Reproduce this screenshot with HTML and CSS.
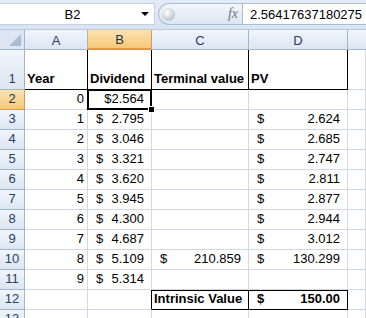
FILE: index.html
```html
<!DOCTYPE html>
<html lang="en">
<head>
    <meta charset="UTF-8">
    <title>Dividend Discount Model</title>
    <link rel="stylesheet" href="styles.css">
</head>
<body>
    <div class="formula-bar">
        <div class="name-box">
            <span class="name">B2</span>
            <span class="drop"></span>
        </div>
        <div class="fx-pill">
            <span class="knob"></span>
            <span class="fx">fx</span>
        </div>
        <div class="formula-input">2.56417637180275</div>
    </div>

    <div class="grid">
        <!-- column headers -->
        <div class="corner"><span class="tri"></span></div>
        <div class="col-head">A</div>
        <div class="col-head sel">B</div>
        <div class="col-head">C</div>
        <div class="col-head">D</div>
        <div class="col-head last"></div>

        <!-- row 1 -->
        <div class="row-head tall">1</div>
        <div class="cell title">Year</div>
        <div class="cell title">Dividend</div>
        <div class="cell title">Terminal value</div>
        <div class="cell title">PV</div>
        <div class="cell"></div>

        <!-- row 2 -->
        <div class="row-head sel">2</div>
        <div class="cell num">0</div>
        <div class="cell num active">$2.564</div>
        <div class="cell"></div>
        <div class="cell"></div>
        <div class="cell"></div>

        <div class="row-head">3</div>
        <div class="cell num">1</div>
        <div class="cell acct"><span>$</span><span>2.795</span></div>
        <div class="cell"></div>
        <div class="cell acct"><span>$</span><span>2.624</span></div>
        <div class="cell"></div>

        <div class="row-head">4</div>
        <div class="cell num">2</div>
        <div class="cell acct"><span>$</span><span>3.046</span></div>
        <div class="cell"></div>
        <div class="cell acct"><span>$</span><span>2.685</span></div>
        <div class="cell"></div>

        <div class="row-head">5</div>
        <div class="cell num">3</div>
        <div class="cell acct"><span>$</span><span>3.321</span></div>
        <div class="cell"></div>
        <div class="cell acct"><span>$</span><span>2.747</span></div>
        <div class="cell"></div>

        <div class="row-head">6</div>
        <div class="cell num">4</div>
        <div class="cell acct"><span>$</span><span>3.620</span></div>
        <div class="cell"></div>
        <div class="cell acct"><span>$</span><span>2.811</span></div>
        <div class="cell"></div>

        <div class="row-head">7</div>
        <div class="cell num">5</div>
        <div class="cell acct"><span>$</span><span>3.945</span></div>
        <div class="cell"></div>
        <div class="cell acct"><span>$</span><span>2.877</span></div>
        <div class="cell"></div>

        <div class="row-head">8</div>
        <div class="cell num">6</div>
        <div class="cell acct"><span>$</span><span>4.300</span></div>
        <div class="cell"></div>
        <div class="cell acct"><span>$</span><span>2.944</span></div>
        <div class="cell"></div>

        <div class="row-head">9</div>
        <div class="cell num">7</div>
        <div class="cell acct"><span>$</span><span>4.687</span></div>
        <div class="cell"></div>
        <div class="cell acct"><span>$</span><span>3.012</span></div>
        <div class="cell"></div>

        <div class="row-head">10</div>
        <div class="cell num">8</div>
        <div class="cell acct"><span>$</span><span>5.109</span></div>
        <div class="cell acct"><span>$</span><span>210.859</span></div>
        <div class="cell acct"><span>$</span><span>130.299</span></div>
        <div class="cell"></div>

        <div class="row-head">11</div>
        <div class="cell num">9</div>
        <div class="cell acct"><span>$</span><span>5.314</span></div>
        <div class="cell"></div>
        <div class="cell"></div>
        <div class="cell"></div>

        <div class="row-head">12</div>
        <div class="cell"></div>
        <div class="cell box-left"></div>
        <div class="cell box bold">Intrinsic Value</div>
        <div class="cell box acct bold"><span>$</span><span>150.00</span></div>
        <div class="cell"></div>

        <div class="row-head">13</div>
        <div class="cell"></div>
        <div class="cell"></div>
        <div class="cell"></div>
        <div class="cell"></div>
        <div class="cell"></div>
    </div>
</body>
</html>
```

FILE: styles.css
```css
body {
    margin: 0;
    padding: 0;
    width: 366px;
    height: 318px;
    overflow: hidden;
    background-color: #fff;
    font-family: "Liberation Sans", Arial, sans-serif;
    font-size: 13px;
    color: #000;
}
.formula-bar {
    display: flex;
    height: 30px;
    box-sizing: border-box;
    padding-top: 3px;
    padding-bottom: 4px;
    background: linear-gradient(#e3ebf6, #d9e4f2);
    border-bottom: 1px solid #b8c9de;
}
.name-box {
    width: 155px;
    display: flex;
    align-items: center;
    box-sizing: border-box;
    background-color: #fff;
    border: 1px solid #c2d0e2;
    border-left: none;
    position: relative;
}
.name {
    flex: 1;
    text-align: center;
    padding-left: 4px;
}
.drop {
    width: 0;
    height: 0;
    margin-right: 5px;
    border-left: 4px solid transparent;
    border-right: 4px solid transparent;
    border-top: 4px solid #000;
}
.fx-pill {
    width: 84px;
    margin-left: 3px;
    display: flex;
    align-items: center;
    justify-content: space-between;
    box-sizing: border-box;
    border: 1px solid #a9bcd5;
    border-right: none;
    border-radius: 12px 0 0 12px;
    background: linear-gradient(#f3f6fb, #dbe5f2);
}
.knob {
    width: 13px;
    height: 13px;
    margin-left: 3px;
    border-radius: 50%;
    background: radial-gradient(circle at 40% 35%, #ffffff, #c9cfd8 60%, #a6afbb);
}
.fx {
    margin-right: 4px;
    font-family: "Liberation Serif", serif;
    font-style: italic;
    font-size: 14px;
    color: #6d7785;
}
.formula-input {
    flex: 1;
    display: flex;
    align-items: center;
    padding-left: 7px;
    background-color: #fff;
    border: 1px solid #a9bcd5;
    border-right: none;
}
.grid {
    display: grid;
    grid-template-columns: 25px 63px 64px 97px 99px 18px;
    grid-template-rows: 20px 40px repeat(12, 20px);
}
.corner,
.col-head,
.row-head {
    box-sizing: border-box;
    background: linear-gradient(#f1f5fb, #dce6f3);
    border-right: 1px solid #9eb6ce;
    border-bottom: 1px solid #9eb6ce;
    color: #27415f;
    display: flex;
    align-items: center;
    justify-content: center;
}
.corner {
    position: relative;
    background: #dde6f2;
}
.tri {
    position: absolute;
    right: 3px;
    bottom: 3px;
    width: 0;
    height: 0;
    border-left: 12px solid transparent;
    border-bottom: 12px solid #a9bcd3;
}
.col-head {
    padding-top: 1px;
}
.col-head.last {
    border-right: none;
}
.row-head {
    align-items: flex-end;
    padding-bottom: 3px;
    border-right-color: #9eb6ce;
}
.col-head.sel,
.row-head.sel {
    background: linear-gradient(#fbe3b4, #f6c978);
    border-color: #f29436;
    color: #1f3050;
}
.col-head.sel {
    border-bottom: 2px solid #f29436;
}
.cell {
    box-sizing: border-box;
    border-right: 1px solid #d0d7e5;
    border-bottom: 1px solid #d0d7e5;
    padding: 0 3px 3px 2px;
    display: flex;
    align-items: flex-end;
    white-space: nowrap;
    overflow: hidden;
}
.title {
    font-weight: bold;
    border-right-color: #000;
    border-bottom-color: #000;
}
.num {
    justify-content: flex-end;
}
.acct {
    justify-content: space-between;
    padding-left: 8px;
    padding-right: 7px;
}
.bold {
    font-weight: bold;
}
.box {
    border-right-color: #000;
    border-bottom-color: #000;
    box-shadow: inset 0 1px 0 #000;
}
.box-left {
    border-right-color: #000;
}
.active {
    position: relative;
    overflow: visible;
    padding-right: 7px;
}
.active::after {
    content: "";
    position: absolute;
    left: -1px;
    top: -1px;
    right: -1px;
    bottom: -1px;
    border: 2px solid #000;
}
.active::before {
    content: "";
    position: absolute;
    right: -4px;
    bottom: -4px;
    width: 5px;
    height: 5px;
    background-color: #000;
    border: 1px solid #fff;
    z-index: 1;
}
```
